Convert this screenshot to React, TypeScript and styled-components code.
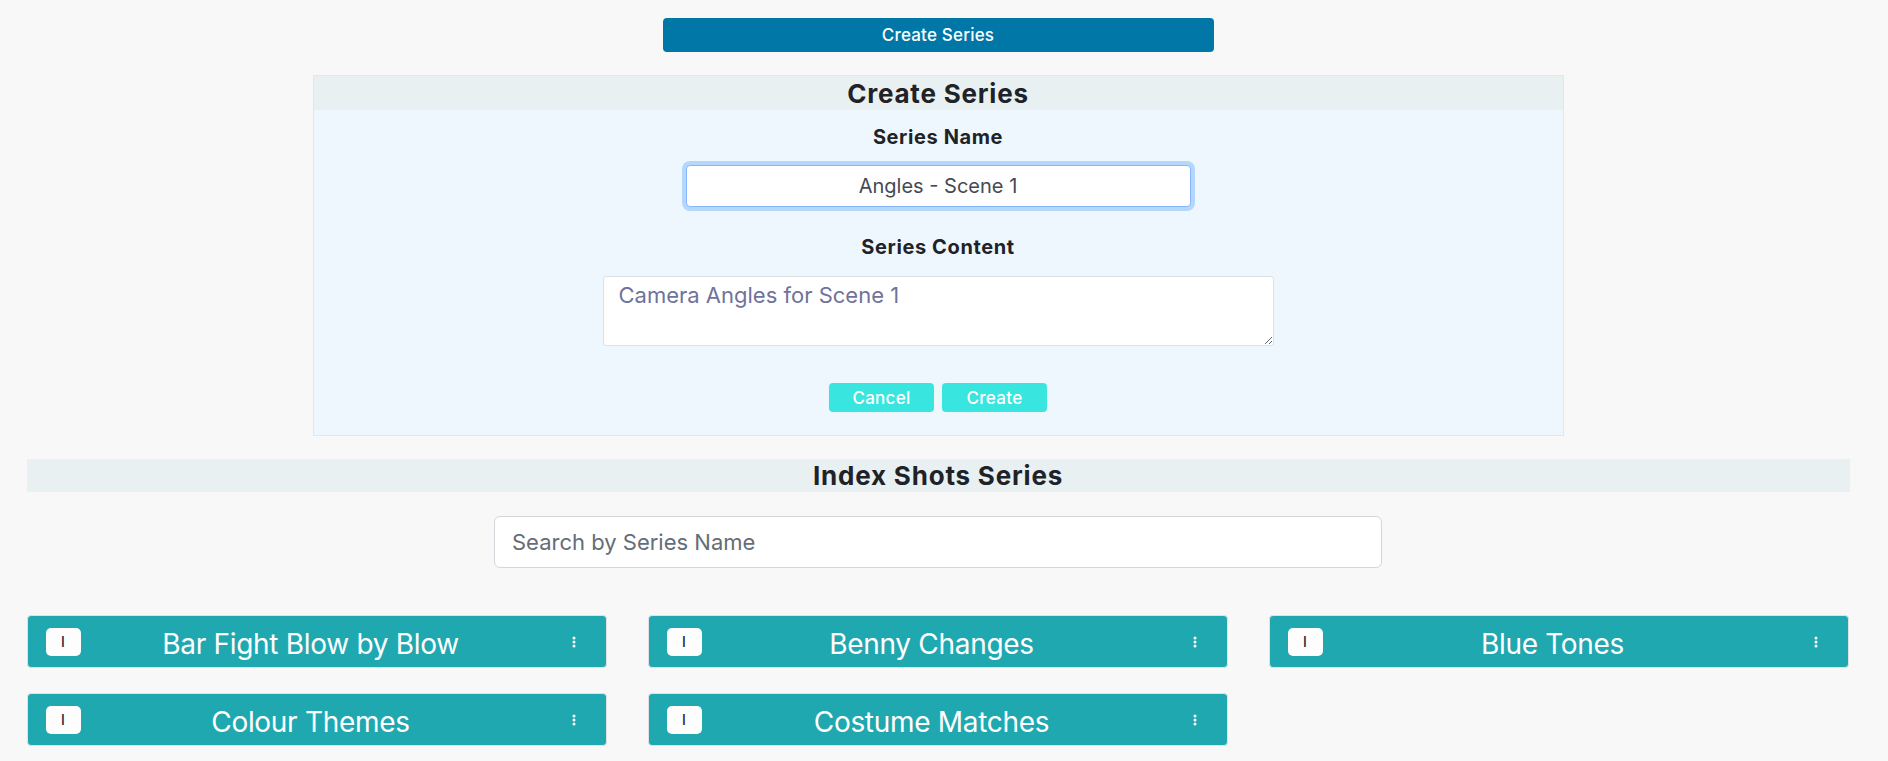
import React from "react";
import styled, { createGlobalStyle } from "styled-components";

const Global = createGlobalStyle`
  html, body { margin: 0; padding: 0; background: #f8f8f8; }
  body { font-family: Inter, "Noto Sans", Roboto, sans-serif; color: #212529; }
  * { box-sizing: border-box; }
`;

const Page = styled.div`
  width: 1876px;
  display: flex;
  flex-direction: column;
  align-items: center;
  padding-top: 18px;
`;

const TopButton = styled.button`
  width: 551px;
  height: 34px;
  border: none;
  border-radius: 4px;
  background: #0077a7;
  color: #fff;
  font-family: inherit;
  font-size: 17px;
  font-weight: 500;
  letter-spacing: 0.2px;
  cursor: pointer;
`;

const Panel = styled.section`
  margin-top: 23px;
  width: 1251px;
  border: 1px solid #e4e6e8;
  background: #eff7fe;
  display: flex;
  flex-direction: column;
  align-items: center;
  padding-bottom: 23px;
`;

const Band = styled.h2<{ $wide?: boolean }>`
  margin: 0;
  width: ${(p) => (p.$wide ? "1823px" : "100%")};
  height: ${(p) => (p.$wide ? "33px" : "34px")};
  background: #e8f0f2;
  display: flex;
  align-items: center;
  justify-content: center;
  font-size: 26px;
  font-weight: 700;
  color: #1f2226;
  letter-spacing: 0.8px;
`;

const Label = styled.label<{ $top: number }>`
  margin-top: ${(p) => p.$top}px;
  font-size: 20px;
  font-weight: 700;
  color: #1f2226;
  line-height: 24px;
  letter-spacing: 0.6px;
`;

const NameInput = styled.input`
  margin-top: 16px;
  width: 505px;
  height: 42px;
  border: 1px solid #86b7fe;
  border-radius: 4px;
  box-shadow: 0 0 0 4px #b6d7fd;
  background: #fff;
  text-align: center;
  font-family: inherit;
  font-size: 20px;
  color: #444a50;
  outline: none;
  caret-color: #222;
`;

const ContentArea = styled.textarea`
  margin-top: 17px;
  width: 671px;
  height: 70px;
  border: 1px solid #dde1e5;
  border-radius: 3px;
  background: #fff;
  padding: 5px 15px;
  font-family: inherit;
  font-size: 22px;
  color: #70739a;
  resize: vertical;
  outline: none;
`;

const ButtonRow = styled.div`
  margin-top: 37px;
  display: flex;
  gap: 8px;
`;

const SmallButton = styled.button`
  width: 105px;
  height: 29px;
  border: none;
  border-radius: 4px;
  background: #38e6df;
  color: #fff;
  font-family: inherit;
  font-size: 17px;
  font-weight: 500;
  letter-spacing: 0.3px;
  cursor: pointer;
`;

const IndexSection = styled.section`
  margin-top: 23px;
  display: flex;
  flex-direction: column;
  align-items: center;
`;

const Search = styled.input`
  margin-top: 24px;
  width: 888px;
  height: 52px;
  border: 1px solid #d3d7dc;
  border-radius: 6px;
  background: #fff;
  padding: 0 17px;
  font-family: inherit;
  font-size: 22px;
  color: #444;
  outline: none;
  &::placeholder { color: #646d78; }
`;

const CardGrid = styled.div`
  margin-top: 47px;
  width: 1823px;
  display: grid;
  grid-template-columns: repeat(3, 580px);
  column-gap: 41px;
  row-gap: 25px;
`;

const Card = styled.div`
  height: 53px;
  border: 1px solid #e0e2e4;
  border-radius: 4px;
  background: #1fa8b0;
  display: grid;
  grid-template-columns: 1fr auto 1fr;
  align-items: center;
  padding: 0 30px 0 18px;
`;

const Badge = styled.span`
  justify-self: start;
  width: 35px;
  height: 28px;
  border-radius: 5px;
  background: #fdfdfd;
  color: #1b1f3a;
  display: flex;
  align-items: center;
  justify-content: center;
  font-size: 14px;
  font-weight: 500;
`;

const CardTitle = styled.span`
  color: #fff;
  font-size: 28px;
  font-weight: 400;
  white-space: nowrap;
  letter-spacing: -0.3px;
  padding-top: 4px;
`;

const Kebab = styled.svg`
  justify-self: end;
`;

const series = [
  "Bar Fight Blow by Blow",
  "Benny Changes",
  "Blue Tones",
  "Colour Themes",
  "Costume Matches",
];

export default function App() {
  return (
    <>
      <Global />
      <Page>
        <TopButton>Create Series</TopButton>
        <Panel>
          <Band>Create Series</Band>
          <Label $top={15}>Series Name</Label>
          <NameInput defaultValue="Angles - Scene 1" />
          <Label $top={28}>Series Content</Label>
          <ContentArea defaultValue="Camera Angles for Scene 1" />
          <ButtonRow>
            <SmallButton>Cancel</SmallButton>
            <SmallButton>Create</SmallButton>
          </ButtonRow>
        </Panel>
        <IndexSection>
          <Band $wide>Index Shots Series</Band>
          <Search placeholder="Search by Series Name" />
          <CardGrid>
            {series.map((s) => (
              <Card key={s}>
                <Badge>I</Badge>
                <CardTitle>{s}</CardTitle>
                <Kebab width="4" height="12" viewBox="0 0 4 12">
                  <circle cx="2" cy="2" r="1.5" fill="#fff" />
                  <circle cx="2" cy="6" r="1.5" fill="#fff" />
                  <circle cx="2" cy="10" r="1.5" fill="#fff" />
                </Kebab>
              </Card>
            ))}
          </CardGrid>
        </IndexSection>
      </Page>
    </>
  );
}
